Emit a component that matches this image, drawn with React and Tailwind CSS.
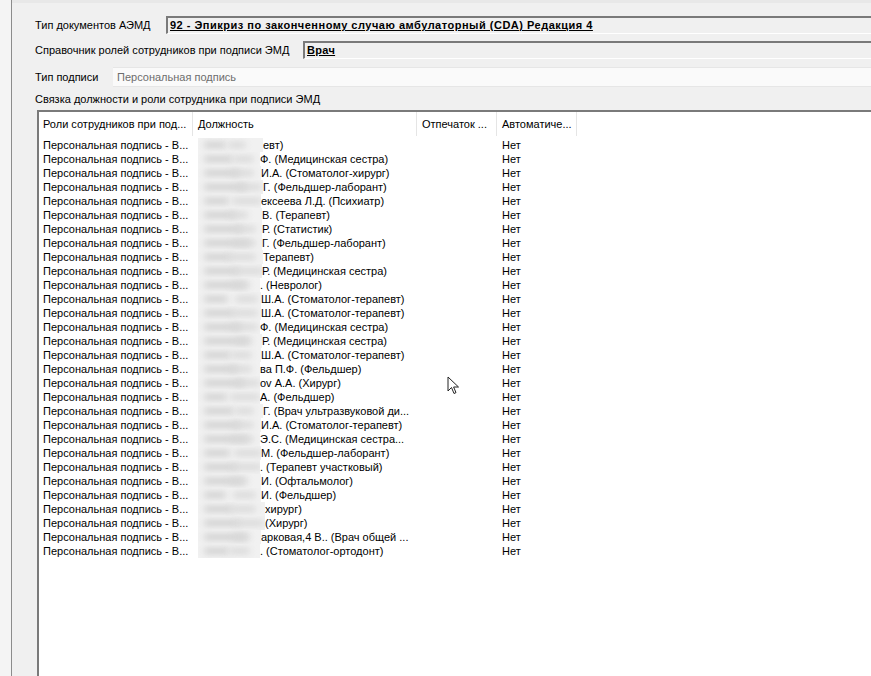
import React from "react";

const rows = [
  [65, "евт)"],
  [62, "Ф. (Медицинская сестра)"],
  [63, "И.А. (Стоматолог-хирург)"],
  [65, "Г. (Фельдшер-лаборант)"],
  [63, "ексеева Л.Д. (Психиатр)"],
  [64, "В. (Терапевт)"],
  [64, "Р. (Статистик)"],
  [64, "Г. (Фельдшер-лаборант)"],
  [65, "Терапевт)"],
  [64, "Р. (Медицинская сестра)"],
  [62, ". (Невролог)"],
  [63, "Ш.А. (Стоматолог-терапевт)"],
  [63, "Ш.А. (Стоматолог-терапевт)"],
  [62, "Ф. (Медицинская сестра)"],
  [64, "Р. (Медицинская сестра)"],
  [63, "Ш.А. (Стоматолог-терапевт)"],
  [62, "ва П.Ф. (Фельдшер)"],
  [62, "ov А.А. (Хирург)"],
  [62, "А. (Фельдшер)"],
  [65, "Г. (Врач ультразвуковой ди..."],
  [63, "И.А. (Стоматолог-терапевт)"],
  [62, "Э.С. (Медицинская сестра..."],
  [63, "М. (Фельдшер-лаборант)"],
  [62, ". (Терапевт участковый)"],
  [63, "И. (Офтальмолог)"],
  [63, "И. (Фельдшер)"],
  [67, "хирург)"],
  [67, "(Хирург)"],
  [63, "арковая,4 В.. (Врач общей ..."],
  [62, ". (Стоматолог-ортодонт)"],
];

const Blur = ({ w, i }) => (
  <span
    className="relative inline-block h-[14px] shrink-0 overflow-hidden bg-[#f1f1f1]"
    style={{ width: w }}
  >
    <span
      className="absolute top-[4px] left-[6px] h-[6px] rounded-full bg-[#cfcfcf] blur-[3px]"
      style={{ width: 22 + ((i * 7) % 25) }}
    />
    <span
      className="absolute top-[4px] h-[6px] rounded-full bg-[#d8d8d8] blur-[3px]"
      style={{ left: 30 + ((i * 5) % 8), width: 18 + ((i * 3) % 14) }}
    />
  </span>
);

const Cursor = () => (
  <svg
    className="absolute left-[447px] top-[376px]"
    width="13"
    height="20"
    viewBox="0 0 13 20"
  >
    <path
      d="M1 1 L1 15 L4.5 11.5 L7 17.5 L9 16.6 L6.6 11 L11.5 11 Z"
      fill="#fff"
      stroke="#222"
      strokeWidth="1"
      strokeLinejoin="round"
    />
  </svg>
);

const App = () => {
  return (
    <div className="relative flex h-[676px] w-[871px] overflow-hidden bg-[#f0f0f0] text-[11px] leading-none text-black font-['Liberation_Sans',Arial,sans-serif]">
      <div className="w-[11px] shrink-0 bg-[#f4f4f4]" />
      <div className="flex flex-1 flex-col border-l border-[#8c8c8c]">
        <div className="h-[3px] bg-[#e8e8e8]" />
        <div className="flex flex-1 flex-col pl-[23px] pt-[13px]">
          <div className="flex h-[18px] items-center">
            <span className="w-[131px] shrink-0">Тип документов АЭМД</span>
            <div className="flex h-[18px] flex-1 items-center border-t-2 border-l-2 border-b border-t-[#7a7a7a] border-l-[#7a7a7a] border-b-white pl-[2px]">
              <span className="font-bold underline tracking-[0.5px]">
                92 - Эпикриз по законченному случаю амбулаторный (CDA) Редакция 4
              </span>
            </div>
          </div>
          <div className="mt-[7px] flex h-[18px] items-center">
            <span className="w-[268px] shrink-0">
              Справочник ролей сотрудников при подписи ЭМД
            </span>
            <div className="flex h-[18px] flex-1 items-center border-t-2 border-l-2 border-b border-t-[#7a7a7a] border-l-[#7a7a7a] border-b-white pl-[2px]">
              <span className="font-bold underline tracking-[0.3px]">Врач</span>
            </div>
          </div>
          <div className="mt-[8px] flex h-[20px] items-center">
            <span className="w-[78px] shrink-0">Тип подписи</span>
            <div className="flex h-[20px] flex-1 items-center border-y border-[#e6e6e6] bg-[#fafafa] pl-[4px] text-[#6d6d6d]">
              Персональная подпись
            </div>
          </div>
          <div className="mt-[7px] h-[16px]">
            Связка должности и роли сотрудника при подписи ЭМД
          </div>
          <div className="ml-[2px] flex flex-1 flex-col border-t-2 border-l-2 border-[#7a7a7a] bg-white">
            <div className="flex h-[24px]">
              <div className="flex w-[154px] items-center border-r border-[#e5e5e5] pl-[4px]">
                Роли сотрудников при под...
              </div>
              <div className="flex w-[224px] items-center border-r border-[#e5e5e5] pl-[5px]">
                Должность
              </div>
              <div className="flex w-[80px] items-center border-r border-[#e5e5e5] pl-[5px]">
                Отпечаток ...
              </div>
              <div className="flex w-[80px] items-center border-r border-[#e5e5e5] pl-[5px]">
                Автоматиче...
              </div>
            </div>
            <div className="flex flex-col pt-[2px]">
              {rows.map(([w, text], i) => (
                <div key={i} className="flex h-[14px] items-center">
                  <div className="w-[154px] whitespace-nowrap pl-[4px]">
                    Персональная подпись - В...
                  </div>
                  <div className="flex w-[224px] items-center whitespace-nowrap pl-[5px]">
                    <Blur w={w} i={i} />
                    <span>{text}</span>
                  </div>
                  <div className="w-[80px]" />
                  <div className="w-[80px] pl-[5px]">Нет</div>
                </div>
              ))}
            </div>
          </div>
        </div>
      </div>
      <Cursor />
    </div>
  );
};

export default App;
